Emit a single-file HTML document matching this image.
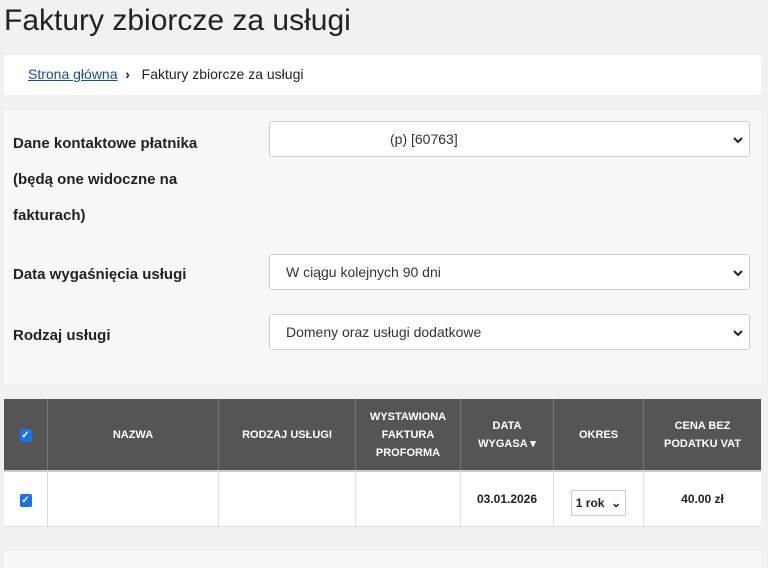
<!DOCTYPE html>
<html><head><meta charset="utf-8"><style>
body{margin:0;background:#f1f1f1;font-family:"Liberation Sans",sans-serif;color:#222;width:768px;height:568px;overflow:hidden;position:relative}
.a{position:absolute}
h1{position:absolute;left:4px;top:0;margin:0;font-weight:normal;font-size:30px;line-height:42px;color:#222}
.sel{position:absolute;left:269px;width:481px;height:35px;background:#fff;border:1px solid #ccc;border-radius:3px;font-size:14px;line-height:35px;color:#333;box-sizing:border-box}
.sel .ar{position:absolute;right:4px;top:11px;width:14px;height:14px}
.lab{position:absolute;left:13px;font-weight:bold;font-size:15px;color:#222}
table{position:absolute;left:4px;top:399px;border-collapse:collapse;width:757px}
th{background:#555;color:#fff;font-size:11px;font-weight:bold;height:71px;border-right:1px solid #777;line-height:18px;padding:0}
td{background:#fff;height:54px;border-right:1px solid #ddd;border-top:2px solid #ccc;border-bottom:1px solid #ddd;text-align:center;font-size:12px;font-weight:bold;padding:0}
.cb{display:inline-block;width:12px;height:13px;background:#1a73e8;border-radius:2px;color:#fff;font-size:10px;line-height:13px;text-align:center}
</style></head><body>
<h1>Faktury zbiorcze za usługi</h1>
<div class="a" style="left:4px;top:55px;width:757px;height:40px;background:#fff;border-radius:3px"></div>
<div class="a" style="left:28px;top:66px;font-size:14px"><span style="color:#1a4f8a;text-decoration:underline">Strona główna</span> &nbsp;<b>›</b>&nbsp;&nbsp; Faktury zbiorcze za usługi</div>
<div class="a" style="left:4px;top:110px;width:757px;height:274px;background:#f8f8f8"></div>
<div class="lab" style="top:126px;line-height:36px">Dane kontaktowe płatnika<br>(będą one widoczne na<br>fakturach)</div>
<div class="lab" style="top:266px">Data wygaśnięcia usługi</div>
<div class="lab" style="top:327px">Rodzaj usługi</div>
<div class="sel" style="top:121px;height:36px"><span style="position:absolute;left:120px">(p) [60763]</span><svg class="ar" viewBox="0 0 14 14"><path d="M3 5l4 4 4-4" stroke="#222" stroke-width="2" fill="none"/></svg></div>
<div class="sel" style="top:254px;height:36px"><span style="position:absolute;left:16px">W ciągu kolejnych 90 dni</span><svg class="ar" viewBox="0 0 14 14"><path d="M3 5l4 4 4-4" stroke="#222" stroke-width="2" fill="none"/></svg></div>
<div class="sel" style="top:314px;height:36px"><span style="position:absolute;left:16px">Domeny oraz usługi dodatkowe</span><svg class="ar" viewBox="0 0 14 14"><path d="M3 5l4 4 4-4" stroke="#222" stroke-width="2" fill="none"/></svg></div>
<table><tr>
<th style="width:43px"><span class="cb">✓</span></th>
<th style="width:170px">NAZWA</th>
<th style="width:136px">RODZAJ USŁUGI</th>
<th style="width:104px">WYSTAWIONA<br>FAKTURA<br>PROFORMA</th>
<th style="width:92px">DATA<br>WYGASA ▾</th>
<th style="width:89px">OKRES</th>
<th style="border-right:none">CENA BEZ<br>PODATKU VAT</th>
</tr><tr>
<td><span class="cb">✓</span></td><td></td><td></td><td></td>
<td>03.01.2026</td>
<td><span style="display:inline-block;border:1px solid #ccc;padding:5px 4px;margin-top:8px">1 rok &nbsp;⌄</span></td>
<td style="border-right:none">40.00 zł</td>
</tr></table>
<div class="a" style="left:4px;top:551px;width:757px;height:17px;background:#f8f8f8"></div>
</body></html>
